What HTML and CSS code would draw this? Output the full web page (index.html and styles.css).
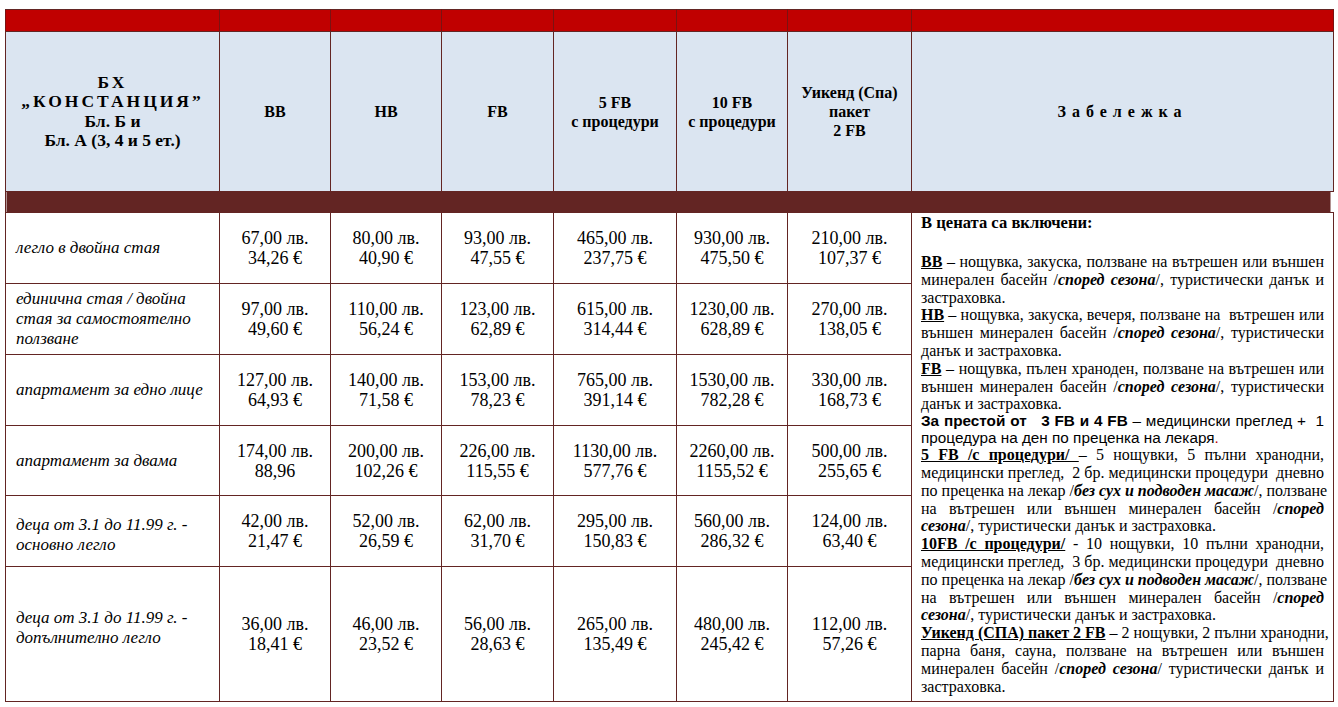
FILE: index.html
```html
<!DOCTYPE html>
<html lang="bg">
<head>
<meta charset="utf-8">
<title>Цени</title>
<link rel="stylesheet" href="styles.css">
</head>
<body>
<table class="price">
  <colgroup>
    <col class="c-label"><col class="c-a"><col class="c-a"><col class="c-b"><col class="c-c"><col class="c-a"><col class="c-d"><col class="c-notes">
  </colgroup>
  <tr class="r-red"><td></td><td></td><td></td><td></td><td></td><td></td><td></td><td></td></tr>
  <tr class="r-head">
    <th class="h-main"><span class="sp">БХ</span><br><span class="sp">„КОНСТАНЦИЯ”</span><br>Бл. Б и<br>Бл. А (3, 4 и 5 ет.)</th>
    <th>ВВ</th>
    <th>НВ</th>
    <th>FB</th>
    <th>5 FB<br>с процедури</th>
    <th>10 FB<br>с процедури</th>
    <th>Уикенд (Спа)<br>пакет<br>2 FB</th>
    <th><span class="sp2">Забележка</span></th>
  </tr>
  <tr class="r-bar"><td colspan="8" class="bar"></td></tr>
  <tr class="r-1">
    <td class="lbl">легло в двойна стая</td>
    <td>67,00 лв.<br>34,26 €</td>
    <td>80,00 лв.<br>40,90 €</td>
    <td>93,00 лв.<br>47,55 €</td>
    <td>465,00 лв.<br>237,75 €</td>
    <td>930,00 лв.<br>475,50 €</td>
    <td>210,00 лв.<br>107,37 €</td>
    <td class="notes" rowspan="6">
      <div class="ttl">В цената са включени:</div>
      <div class="blank"></div>
      <div class="j"><b class="u">ВВ</b> – нощувка, закуска, ползване на вътрешен или външен</div>
      <div class="j">минерален басейн /<b><i>според сезона</i></b>/, туристически данък и</div>
      <div>застраховка.</div>
      <div class="j"><b class="u">НВ</b> – нощувка, закуска, вечеря, ползване на&nbsp; вътрешен или</div>
      <div class="j">външен минерален басейн /<b><i>според сезона</i></b>/, туристически</div>
      <div>данък и застраховка.</div>
      <div class="j"><b class="u">FB</b> – нощувка, пълен храноден, ползване на вътрешен или</div>
      <div class="j">външен минерален басейн /<b><i>според сезона</i></b>/, туристически</div>
      <div>данък и застраховка.</div>
      <div class="j sans"><b>За престой от&nbsp;&nbsp; 3 FB и 4 FB</b> – медицински преглед +&nbsp; 1</div>
      <div class="sans">процедура на ден по преценка на лекаря<span class="red">.</span></div>
      <div class="j"><b class="u">5 FB /с процедури/&nbsp;</b>– 5 нощувки, 5 пълни хранодни,</div>
      <div class="j">медицински преглед,&nbsp; 2 бр. медицински процедури&nbsp; дневно</div>
      <div class="j">по преценка на лекар /<b><i>без сух и подводен масаж</i></b>/, ползване</div>
      <div class="j">на вътрешен или външен минерален басейн /<b><i>според</i></b></div>
      <div><b><i>сезона</i></b>/, туристически данък и застраховка.</div>
      <div class="j"><b class="u">10FB /с процедури/</b> - 10 нощувки, 10 пълни хранодни,</div>
      <div class="j">медицински преглед,&nbsp; 3 бр. медицински процедури&nbsp; дневно</div>
      <div class="j">по преценка на лекар /<b><i>без сух и подводен масаж</i></b>/, ползване</div>
      <div class="j">на вътрешен или външен минерален басейн /<b><i>според</i></b></div>
      <div><b><i>сезона</i></b>/, туристически данък и застраховка.</div>
      <div class="j"><b class="u">Уикенд (СПА) пакет 2 FB</b> – 2 нощувки, 2 пълни хранодни,</div>
      <div class="j">парна баня, сауна, ползване на вътрешен или външен</div>
      <div class="j">минерален басейн /<b><i>според сезона</i></b>/ туристически данък и</div>
      <div>застраховка.</div>
    </td>
  </tr>
  <tr class="r-2">
    <td class="lbl">единична стая / двойна<br>стая за самостоятелно<br>ползване</td>
    <td>97,00 лв.<br>49,60 €</td>
    <td>110,00 лв.<br>56,24 €</td>
    <td>123,00 лв.<br>62,89 €</td>
    <td>615,00 лв.<br>314,44 €</td>
    <td>1230,00 лв.<br>628,89 €</td>
    <td>270,00 лв.<br>138,05 €</td>
  </tr>
  <tr class="r-3">
    <td class="lbl">апартамент за едно лице</td>
    <td>127,00 лв.<br>64,93 €</td>
    <td>140,00 лв.<br>71,58 €</td>
    <td>153,00 лв.<br>78,23 €</td>
    <td>765,00 лв.<br>391,14 €</td>
    <td>1530,00 лв.<br>782,28 €</td>
    <td>330,00 лв.<br>168,73 €</td>
  </tr>
  <tr class="r-4">
    <td class="lbl">апартамент за двама</td>
    <td>174,00 лв.<br>88,96</td>
    <td>200,00 лв.<br>102,26 €</td>
    <td>226,00 лв.<br>115,55 €</td>
    <td>1130,00 лв.<br>577,76 €</td>
    <td>2260,00 лв.<br>1155,52 €</td>
    <td>500,00 лв.<br>255,65 €</td>
  </tr>
  <tr class="r-5">
    <td class="lbl lbl-down">деца от 3.1 до 11.99 г. -<br>основно легло</td>
    <td>42,00 лв.<br>21,47 €</td>
    <td>52,00 лв.<br>26,59 €</td>
    <td>62,00 лв.<br>31,70 €</td>
    <td>295,00 лв.<br>150,83 €</td>
    <td>560,00 лв.<br>286,32 €</td>
    <td>124,00 лв.<br>63,40 €</td>
  </tr>
  <tr class="r-6">
    <td class="lbl lbl-up">деца от 3.1 до 11.99 г. -<br>допълнително легло</td>
    <td>36,00 лв.<br>18,41 €</td>
    <td>46,00 лв.<br>23,52 €</td>
    <td>56,00 лв.<br>28,63 €</td>
    <td>265,00 лв.<br>135,49 €</td>
    <td>480,00 лв.<br>245,42 €</td>
    <td>112,00 лв.<br>57,26 €</td>
  </tr>
</table>
</body>
</html>
```

FILE: styles.css
```css
html, body {
  margin: 0;
  padding: 0;
  background: #ffffff;
}

body {
  font-family: "Liberation Serif", "Times New Roman", serif;
  color: #000;
}

.price {
  margin: 9px 0 0 5px;
  width: 1328px;
  table-layout: fixed;
  border-collapse: collapse;
  border: 1px solid #632523;
}

.c-label { width: 214px; }
.c-a { width: 111px; }
.c-b { width: 112px; }
.c-c { width: 123px; }
.c-d { width: 124px; }
.c-notes { width: 422px; }

.price td,
.price th {
  border: 1px solid #632523;
  padding: 0;
}

.price .r-red td {
  background: #c00000;
  height: 21px;
  border-left: 1px solid #7a1212;
  border-right: 1px solid #7a1212;
}

.r-head th {
  background: #dbe5f1;
  height: 159px;
  font-size: 16px;
  line-height: 19px;
  font-weight: bold;
  text-align: center;
  vertical-align: middle;
}

.r-head th.h-main {
  font-size: 17.5px;
  line-height: 19.5px;
}

.sp { letter-spacing: 3px; }
.sp2 { letter-spacing: 6px; }

.r-bar td {
  height: 20px;
  background: linear-gradient(to right, #632523 calc(100% - 3px), #ffffff calc(100% - 3px));
  border-right-color: #ffffff;
}

.r-1, .r-2, .r-3, .r-5 { height: 71px; }
.r-4 { height: 70px; }
.r-6 { height: 135px; }

.price tr:nth-child(n+4) td {
  font-size: 18px;
  line-height: 20px;
  text-align: center;
  vertical-align: middle;
}

.price tr td.lbl {
  text-align: left;
  font-style: italic;
  font-size: 17px;
  padding-left: 10px;
}

.price tr td.lbl-up {
  padding-bottom: 12px;
}

.price tr td.lbl-down {
  padding-top: 8px;
}

.price tr td.notes {
  vertical-align: top;
  text-align: left;
  padding: 0 9px 0 9px;
  font-size: 16px;
  line-height: 17.8px;
}

.notes div {
  white-space: nowrap;
}

.notes .ttl {
  font-weight: bold;
  font-size: 16.6px;
  line-height: 20px;
}

.notes .blank { height: 20px; }

.notes .j {
  text-align: justify;
  text-align-last: justify;
}

.notes .u {
  text-decoration: underline;
}

.notes .sans {
  font-family: "Liberation Sans", Arial, sans-serif;
  font-size: 15.3px;
  line-height: 16.5px;
}

.red { color: #c00000; }
```
